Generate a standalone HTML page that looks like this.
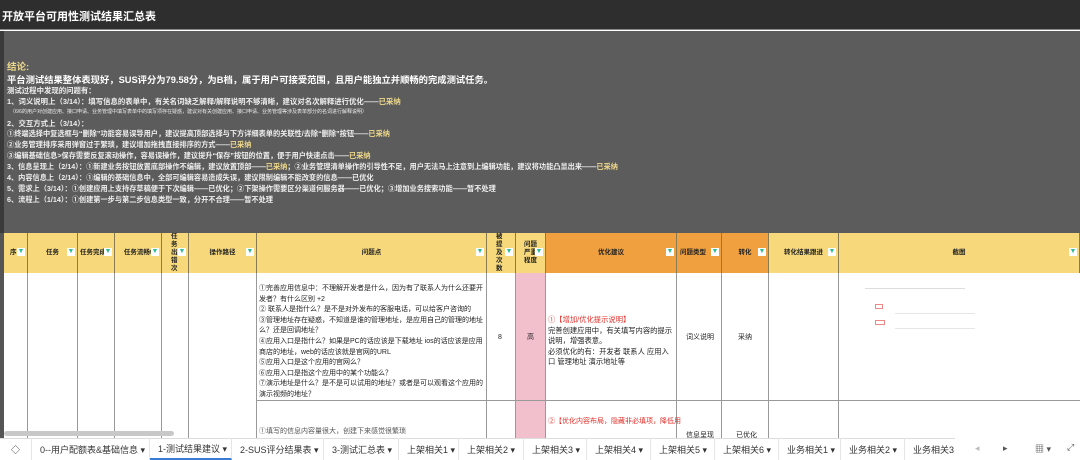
<!DOCTYPE html>
<html><head><meta charset="utf-8"><style>
*{margin:0;padding:0;box-sizing:border-box}
body{width:1080px;height:460px;overflow:hidden;background:#fff;font-family:"Liberation Sans","Noto Sans CJK SC",sans-serif;position:relative}
.a{position:absolute;white-space:nowrap}
#title{left:0;top:0;width:1080px;height:30px;background:#2e2e2e;border-bottom:1px solid #888}
#title span{position:absolute;left:2px;top:8px;color:#fff;font-size:11px;font-weight:bold}
#gray{left:0;top:31px;width:1080px;height:202px;background:#5c5c5c;border-left:4px solid #3a3a3a}
.t{color:#eee;font-size:7.4px;font-weight:bold;left:7px}
.y{color:#efd98a}
.hd{top:233px;height:40px;border-right:1px solid #8a7a50;font-size:6.5px;font-weight:bold;color:#222;display:flex;align-items:center;justify-content:center;text-align:center;line-height:8px}
.yl{background:#f7d97c}.or{background:#f0a03e}
.f{position:absolute;right:2px;top:15px;width:8px;height:8px;background:#fff;color:#3b9;font-size:7px;line-height:8px;text-align:center}
.c{border-right:1px solid #999;top:273px;height:165px}
.tx{font-size:7px;color:#222;line-height:10.6px}
.tab{top:438px;height:22px;font-size:9px;color:#333;display:flex;align-items:center;border-right:1px solid #e5e5e5;padding:0 8px}
</style></head><body>
<div class="a" id="title"><span>开放平台可用性测试结果汇总表</span></div>
<div class="a" id="gray"></div>
<div class="a t y" style="top:59px;font-size:9.5px">结论:</div>
<div class="a t" style="top:72px;font-size:9.3px;color:#fff">平台测试结果整体表现好，SUS评分为79.58分，为B档，属于用户可接受范围，且用户能独立并顺畅的完成测试任务。</div>
<div class="a t" style="top:85px">测试过程中发现的问题有：</div>
<div class="a t" style="top:96px">1、词义说明上（3/14）：填写信息的表单中，有关名词缺乏解释/解释说明不够清晰，建议对名次解释进行优化——<span class="y">已采纳</span></div>
<div class="a t" style="top:108px;font-size:5px;left:10px;font-weight:normal">（6/6的用户对创建应用、接口申请、业务管理中填写表单中的填写项存在疑惑，建议对有关创建应用、接口申请、业务管理等涉及表单部分的名词进行解释说明）</div>
<div class="a t" style="top:118px">2、交互方式上（3/14）：</div>
<div class="a t" style="top:129px;font-size:7.2px">①终端选择中复选框与“删除”功能容易误导用户，建议提高顶部选择与下方详细表单的关联性/去除“删除”按钮——<span class="y">已采纳</span></div>
<div class="a t" style="top:140px;font-size:7.2px">②业务管理排序采用弹窗过于繁琐，建议增加拖拽直接排序的方式——<span class="y">已采纳</span></div>
<div class="a t" style="top:151px;font-size:7.2px">③编辑基础信息&gt;保存需要反复滚动操作，容易误操作，建议提升“保存”按钮的位置，便于用户快速点击——<span class="y">已采纳</span></div>
<div class="a t" style="top:162px;font-size:7.2px">3、信息呈现上（2/14）：①新建业务按钮放置底部操作不编辑，建议放置顶部——<span class="y">已采纳</span>；②业务管理清单操作的引导性不足，用户无法马上注意到上编辑功能，建议将功能凸显出来——<span class="y">已采纳</span></div>
<div class="a t" style="top:173px;font-size:7.2px">4、内容信息上（2/14）：①编辑的基础信息中，全部可编辑容易造成失误，建议限制编辑不能改变的信息——已优化</div>
<div class="a t" style="top:184px;font-size:7.2px">5、需求上（3/14）：①创建应用上支持存草稿便于下次编辑——已优化；②下架操作需要区分渠道何服务器——已优化；③增加业务搜索功能——暂不处理</div>
<div class="a t" style="top:195px;font-size:7.2px">6、流程上（1/14）：①创建第一步与第二步信息类型一致，分开不合理——暂不处理</div>

<div class="a yl hd" style="left:0;width:28px;border-left:4px solid #555;justify-content:flex-start;padding-left:6px">序<span class="f">▼</span></div>
<div class="a yl hd" style="left:28px;width:50px">任务<span class="f">▼</span></div>
<div class="a yl hd" style="left:78px;width:37px;justify-content:flex-start;padding-left:2px">任务完成<span class="f">▼</span></div>
<div class="a yl hd" style="left:115px;width:47px">任务流畅t<span class="f">▼</span></div>
<div class="a yl hd" style="left:162px;width:27px;justify-content:flex-start;padding-left:9px">任<br>务<br>出<br>错<br>次<span class="f">▼</span></div>
<div class="a yl hd" style="left:189px;width:68px">操作路径<span class="f">▼</span></div>
<div class="a yl hd" style="left:257px;width:230px">问题点<span class="f">▼</span></div>
<div class="a yl hd" style="left:487px;width:29px;justify-content:flex-start;padding-left:9px">被<br>提<br>及<br>次<br>数<span class="f">▼</span></div>
<div class="a yl hd" style="left:516px;width:30px">问题<br>严重<br>程度<span class="f">▼</span></div>
<div class="a or hd" style="left:546px;width:131px">优化建议<span class="f">▼</span></div>
<div class="a or hd" style="left:677px;width:45px;justify-content:flex-start;padding-left:3px">问题类型<span class="f">▼</span></div>
<div class="a or hd" style="left:722px;width:47px">转化<span class="f">▼</span></div>
<div class="a yl hd" style="left:769px;width:70px">转化结果跟进<span class="f">▼</span></div>
<div class="a yl hd" style="left:839px;width:241px">截图<span class="f">▼</span></div>

<div class="a" style="left:0;top:273px;width:4px;height:165px;background:#555"></div>
<div class="a c" style="left:4px;width:24px"></div>
<div class="a c" style="left:28px;width:50px"></div>
<div class="a c" style="left:78px;width:37px"></div>
<div class="a c" style="left:115px;width:47px"></div>
<div class="a c" style="left:162px;width:27px"></div>
<div class="a c" style="left:189px;width:68px"></div>
<div class="a c" style="left:257px;width:230px"></div>
<div class="a c" style="left:487px;width:29px"></div>
<div class="a c" style="left:516px;width:30px;background:#f2bfcc"></div>
<div class="a c" style="left:546px;width:131px"></div>
<div class="a c" style="left:677px;width:45px"></div>
<div class="a c" style="left:722px;width:47px"></div>
<div class="a c" style="left:769px;width:70px"></div>
<div class="a c" style="left:839px;width:241px;border:none"></div>
<div class="a" style="left:257px;top:400px;width:823px;height:1px;background:#999"></div>

<div class="a tx" style="left:259px;top:284px;white-space:normal;width:226px">①完善应用信息中：不理解开发者是什么，因为有了联系人为什么还要开发者？有什么区别 +2<br>② 联系人是指什么？是不是对外发布的客服电话，可以给客户咨询的<br>③管理地址存在疑惑，不知道是谁的管理地址，是应用自己的管理的地址么？还是回调地址？<br>④应用入口是指什么？如果是PC的话应该是下载地址 ios的话应该是应用商店的地址，web的话应该就是官网的URL<br>⑤应用入口是这个应用的官网么？<br>⑥应用入口是指这个应用中的某个功能么？<br>⑦演示地址是什么？是不是可以试用的地址？或者是可以观看这个应用的演示视频的地址？</div>
<div class="a tx" style="left:498px;top:333px">8</div>
<div class="a tx" style="left:527px;top:333px">高</div>
<div class="a tx" style="left:548px;top:315px;white-space:normal;width:127px;font-size:7.3px"><span style="color:#e0302a">①【增加/优化提示说明】</span><br>完善创建应用中，有关填写内容的提示说明，增强表意。<br>必须优化的有：开发者 联系人 应用入口 管理地址 演示地址等</div>
<div class="a tx" style="left:686px;top:333px">词义说明</div>
<div class="a tx" style="left:738px;top:333px">采纳</div>
<div class="a" style="left:845px;top:282px;width:140px;height:70px">
<div class="a" style="left:20px;top:6px;width:100px;height:1px;background:#ddd"></div>
<div class="a" style="left:30px;top:22px;width:8px;height:5px;border:1px solid #e88"></div>
<div class="a" style="left:30px;top:38px;width:10px;height:5px;border:1px solid #e88"></div>
<div class="a" style="left:50px;top:31px;width:80px;height:1px;background:#e6e6e6"></div>
<div class="a" style="left:50px;top:46px;width:80px;height:1px;background:#e6e6e6"></div>
</div>
<div class="a tx" style="left:548px;top:417px;color:#e0302a">②【优化内容布局，隐藏非必填项，降低用</div>
<div class="a tx" style="left:686px;top:431px">信息呈现</div>
<div class="a tx" style="left:736px;top:431px">已优化</div>
<div class="a tx" style="left:259px;top:427px;color:#555">①填写的信息内容量很大，创建下来感觉很繁琐</div>
<div class="a" style="left:4px;top:431px;width:170px;height:5px;background:#c8c8c8;border-radius:3px"></div>

<div class="a" style="left:0;top:438px;width:1080px;height:22px;background:#fff;border-top:1px solid #ddd"></div>
<div class="a tab" style="left:0;width:32px;justify-content:center">◇</div>
<div class="a tab" style="left:32px;width:118px">0--用户配额表&amp;基础信息 ▾</div>
<div class="a tab" style="left:150px;width:82px;border-bottom:2px solid #3a7bd5">1-测试结果建议 ▾</div>
<div class="a tab" style="left:232px;width:92px">2-SUS评分结果表 ▾</div>
<div class="a tab" style="left:324px;width:75px">3-测试汇总表 ▾</div>
<div class="a tab" style="left:399px;width:60px">上架相关1 ▾</div>
<div class="a tab" style="left:459px;width:65px">上架相关2 ▾</div>
<div class="a tab" style="left:524px;width:63px">上架相关3 ▾</div>
<div class="a tab" style="left:587px;width:64px">上架相关4 ▾</div>
<div class="a tab" style="left:651px;width:64px">上架相关5 ▾</div>
<div class="a tab" style="left:715px;width:64px">上架相关6 ▾</div>
<div class="a tab" style="left:779px;width:62px">业务相关1 ▾</div>
<div class="a tab" style="left:841px;width:64px">业务相关2 ▾</div>
<div class="a tab" style="left:905px;width:60px">业务相关3</div>
<div class="a" style="left:955px;top:438px;width:125px;height:22px;background:#fff;font-size:9px;color:#555"><span class="a" style="left:20px;top:5px;color:#bbb">◂</span><span class="a" style="left:48px;top:5px">▸</span><span class="a" style="left:80px;top:4px">▦ ▾</span><span class="a" style="left:112px;top:4px">⤢</span></div>
</body></html>
